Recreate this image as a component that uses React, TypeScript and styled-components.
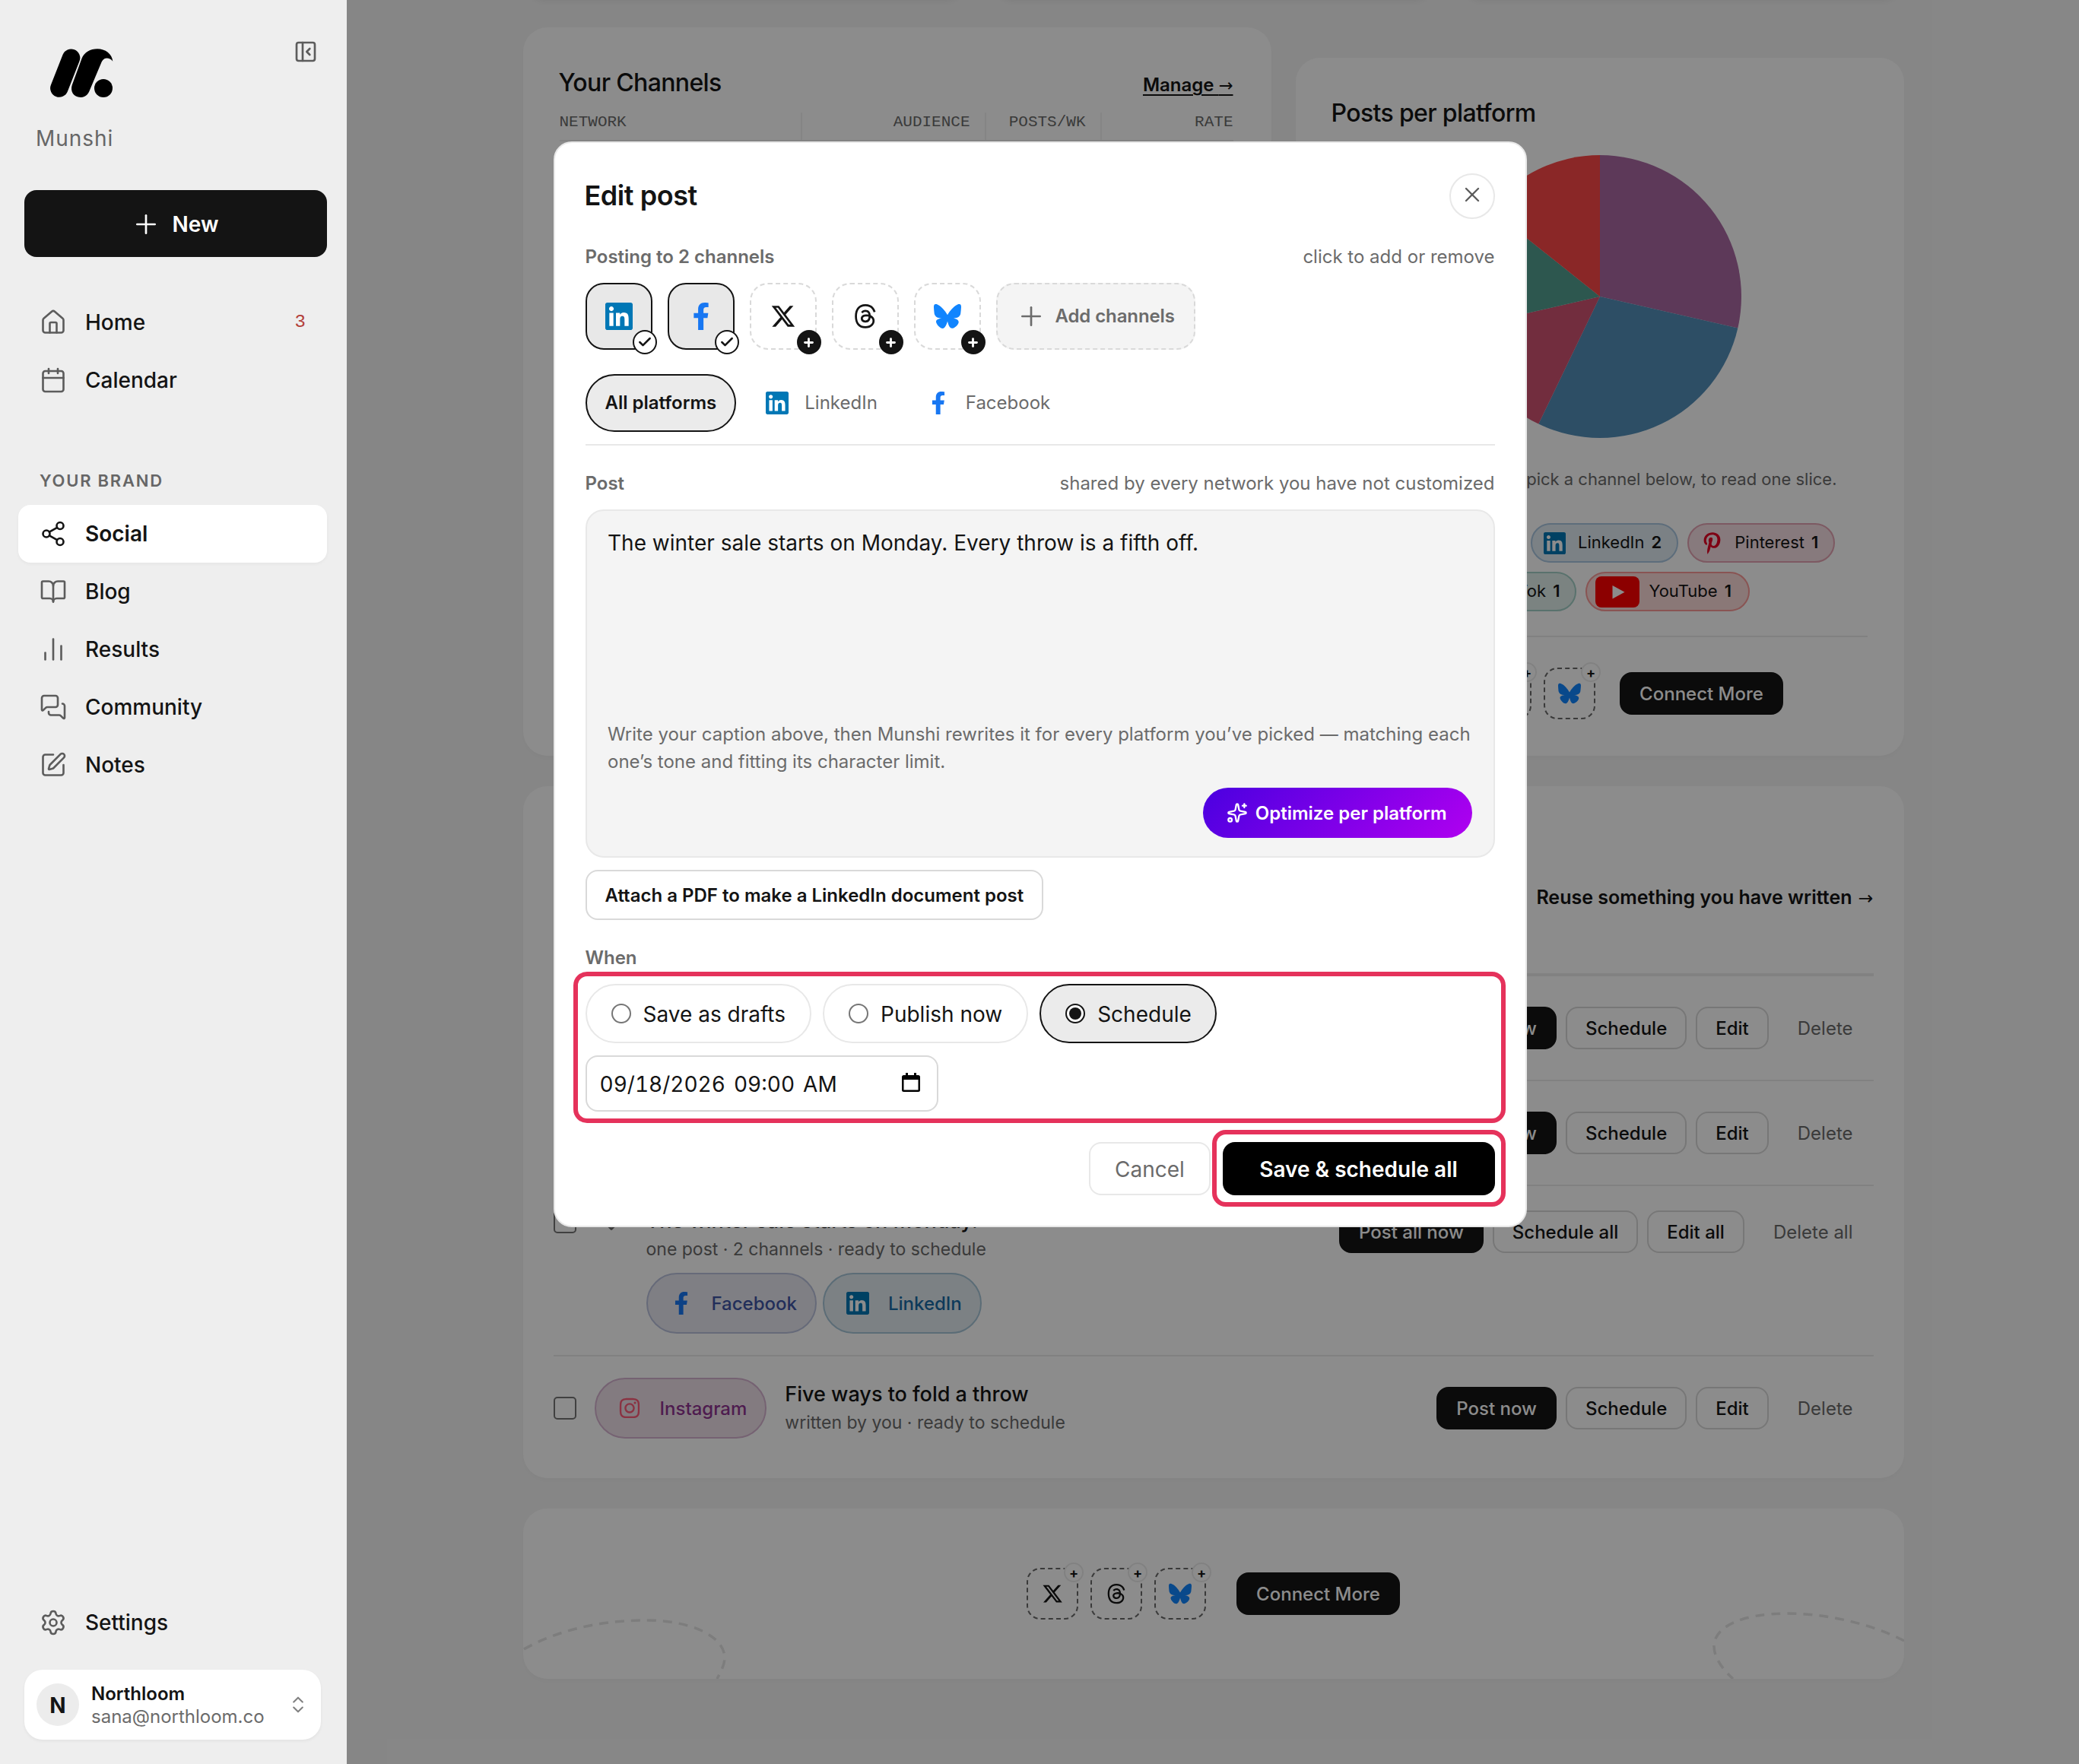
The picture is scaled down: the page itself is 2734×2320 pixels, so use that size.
import React, { useState } from 'react';
import styled, { createGlobalStyle, css } from 'styled-components';
import {
  BookOpen,
  Calendar,
  ChartNoAxesColumn,
  Check,
  ChevronDown,
  ChevronsUpDown,
  House,
  MessagesSquare,
  PanelLeftClose,
  Plus,
  Settings,
  Share2,
  Sparkles,
  SquarePen,
  X
} from 'lucide-react';
import { FaFacebookF, FaInstagram, FaPinterestP, FaTiktok } from 'react-icons/fa';
import { FaBluesky, FaThreads, FaXTwitter } from 'react-icons/fa6';

const GlobalStyle = createGlobalStyle`
  * {
    box-sizing: border-box;
  }

  body {
    margin: 0;
    background: #f5f5f5;
    color: #141414;
    font-family: Inter, 'Liberation Sans', sans-serif;
    font-size: 24px;
  }

  button,
  textarea {
    margin: 0;
    font: inherit;
    color: inherit;
  }
`;

type Network =
  | 'linkedin'
  | 'facebook'
  | 'x'
  | 'threads'
  | 'bluesky'
  | 'instagram'
  | 'pinterest'
  | 'tiktok'
  | 'youtube';

const Page = styled.div`
  display: flex;
  width: 2734px;
  height: 2320px;
  overflow: hidden;
  position: relative;
`;

/* ---------- sidebar ---------- */

const Sidebar = styled.aside`
  display: flex;
  flex-direction: column;
  width: 456px;
  height: 100%;
  padding: 52px 26px 32px 24px;
  background: #eeeeee;
  flex-shrink: 0;
`;

const BrandRow = styled.div`
  display: flex;
  justify-content: space-between;
  align-items: flex-start;
  height: 112px;
  padding: 0 12px 0 42px;
  color: #5c5c5c;

  .logo {
    margin-top: 12px;
  }
`;

const BrandName = styled.div`
  height: 36px;
  padding-left: 23px;
  font-size: 28px;
  line-height: 36px;
  letter-spacing: 0.95px;
  color: #666666;
`;

const NewButton = styled.button`
  display: flex;
  align-items: center;
  justify-content: center;
  gap: 15px;
  height: 88px;
  margin: 50px 0 48px 8px;
  padding: 2px 3px 0 0;
  border: none;
  border-radius: 16px;
  background: #141414;
  color: white;
  font-size: 28px;
  font-weight: 600;
`;

const NavItem = styled.a<{ active?: boolean }>`
  display: flex;
  align-items: center;
  gap: 24px;
  height: 76px;
  padding: 0 30px 0 28px;
  border-radius: 16px;
  font-size: 28px;
  font-weight: 500;
  flex-shrink: 0;

  svg {
    color: #5c5c5c;
  }

  ${({ active }) =>
    active &&
    css`
      background: white;
      font-weight: 600;
      box-shadow: 0 2px 4px rgba(0, 0, 0, 0.04);

      svg {
        color: #141414;
      }
    `}
`;

const NavCount = styled.span`
  margin-left: auto;
  margin-right: -2px;
  color: #b3403a;
  font-family: 'Liberation Mono', monospace;
  font-size: 24px;
  line-height: 28px;
`;

const NavHeading = styled.div`
  height: 28px;
  margin: 80px 0 18px;
  padding-left: 28px;
  color: #666666;
  font-size: 22px;
  font-weight: 600;
  line-height: 28px;
  letter-spacing: 1.76px;
`;

const NavSpacer = styled.div`
  flex: 1;
`;

const Account = styled.div`
  display: flex;
  align-items: center;
  gap: 16px;
  height: 92px;
  margin: 24px 8px 0;
  padding: 0 16px;
  border-radius: 24px;
  background: white;
  box-shadow: 0 2px 4px rgba(0, 0, 0, 0.05);

  svg {
    margin-left: auto;
    color: #808080;
  }
`;

const Avatar = styled.div`
  width: 56px;
  height: 56px;
  border-radius: 50%;
  background: #ececec;
  font-size: 28px;
  font-weight: 700;
  line-height: 58px;
  text-align: center;
`;

const AccountText = styled.div`
  padding-top: 2px;
  font-size: 24px;
  line-height: 30px;

  strong {
    display: block;
    font-weight: 600;
  }

  span {
    color: #6b6b6b;
  }
`;

/* ---------- page behind the dialog ---------- */

const Main = styled.main`
  position: relative;
  flex: 1;
  padding: 0 230.5px 0 231.5px;
  overflow: hidden;
`;

const Scrim = styled.div`
  position: absolute;
  inset: 0;
  background: rgba(0, 0, 0, 0.45);
`;

const Card = styled.section`
  border-radius: 32px;
  background: white;
  box-shadow: 0 4px 6px rgba(0, 0, 0, 0.025);
`;

const StatRow = styled.div`
  display: grid;
  grid-template-columns: repeat(3, 1fr);
  gap: 32px;
  height: 36px;

  ${Card} {
    height: 60px;
    margin-top: -60px;
    box-shadow: 0 4px 6px rgba(0, 0, 0, 0.045);
  }
`;

const TopGrid = styled.div`
  display: grid;
  grid-template-columns: 984px 800px;
  gap: 32px;
  height: 958px;
`;

const ChannelsCard = styled(Card)`
  padding: 50px 50px 0 48px;
`;

const ChannelsHead = styled.div`
  display: flex;
  justify-content: space-between;
  align-items: baseline;
  height: 62px;
`;

const CardTitle = styled.h2`
  margin: 0 0 0 -1px;
  font-size: 32px;
  font-weight: 500;
  line-height: 46px;
  letter-spacing: -0.64px;
`;

const Arrow = styled.span`
  font-family: 'DejaVu Sans', sans-serif;
  font-size: 0.94em;
  font-weight: 400;
  line-height: 1;
`;

const ManageLink = styled.a`
  font-weight: 600;
  text-decoration: underline;
  text-underline-offset: 4px;
  text-decoration-thickness: 2px;
`;

const ChannelsTable = styled.div`
  display: grid;
  grid-template-columns: 317px 242px 152px 1fr;
  height: 38px;
  border-bottom: 2px solid #eeeeee;
`;

const HeadCell = styled.div<{ first?: boolean }>`
  padding-top: 1px;
  padding-right: ${({ first }) => (first ? 0 : 19)}px;
  border-left: ${({ first }) => (first ? 'none' : '2px solid #f2f2f2')};
  color: #6b6b6b;
  font-family: 'Liberation Mono', monospace;
  font-size: 21px;
  line-height: 24px;
  text-align: ${({ first }) => (first ? 'left' : 'right')};

  &:last-child {
    padding-right: 0;
  }
`;

const PlatformCard = styled(Card)`
  display: flex;
  flex-direction: column;
  align-items: center;
  margin-top: 40px;
  padding: 50px 48px 0;

  ${CardTitle} {
    align-self: flex-start;
  }
`;

const PieHint = styled.p`
  width: 624px;
  margin: 39px 0 0;
  color: #6b6b6b;
  font-size: 22px;
  line-height: 30px;
  text-align: right;
  white-space: nowrap;
`;

const Legend = styled.div`
  display: flex;
  flex-wrap: wrap;
  justify-content: center;
  gap: 12px;
  width: 640px;
  margin-top: 43px;
  margin-left: -3px;
`;

interface Tint {
  bg: string;
  line: string;
}

const LegendPill = styled.span<{ tint: Tint; tight?: boolean }>`
  display: flex;
  align-items: center;
  gap: 12px;
  height: 52px;
  padding: ${({ tight }) => (tight ? '0 22px 0 11px' : '0 20px 0 12px')};
  border: 2px solid ${({ tint }) => tint.line};
  border-radius: 26px;
  background: ${({ tint }) => tint.bg};
  font-size: 22px;

  b {
    font-weight: 600;
    margin-left: -3px;
  }
`;

const LegendLabel = styled.span`
  margin-top: -2px;
`;

const LegendIcon = styled.span<{ wide?: boolean }>`
  display: flex;
  justify-content: center;
  width: ${({ wide }) => (wide ? 58 : 36)}px;
`;

const ConnectRow = styled.div<{ gap: number }>`
  display: flex;
  align-items: center;
  justify-content: center;

  button {
    margin-left: ${({ gap }) => gap - 16}px;
  }
`;

const GhostTile = styled.div`
  position: relative;
  display: flex;
  align-items: center;
  justify-content: center;
  width: 68px;
  height: 68px;
  margin-right: 16px;
  border: 2px dashed #6b6b6b;
  border-radius: 18px;
`;

const GhostPlus = styled.span`
  position: absolute;
  top: -9px;
  right: -9px;
  width: 26px;
  height: 26px;
  border: 2px solid #ececec;
  border-radius: 50%;
  background: white;
  font-size: 18px;
  font-weight: 700;
  line-height: 23px;
  text-align: center;
`;

const Rule = styled.div`
  width: 100%;
  height: 2px;
  margin: 32px 0 40px;
  background: #ebebeb;
`;

const SmallButton = styled.button<{ kind?: 'dark' | 'plain' }>`
  height: 56px;
  padding: 0 24px;
  border: 2px solid #d9d9d9;
  border-radius: 16px;
  background: white;
  font-size: 24px;
  font-weight: 500;
  white-space: nowrap;

  ${({ kind }) =>
    kind === 'dark' &&
    css`
      border-color: #141414;
      background: #141414;
      color: white;
    `}

  ${({ kind }) =>
    kind === 'plain' &&
    css`
      border-color: transparent;
      color: #6b6b6b;
      font-weight: 400;
    `}
`;

const QueueCard = styled(Card)`
  height: 910px;
  margin-top: 40px;
  padding: 0 40px;
`;

const QueueHead = styled.div`
  display: flex;
  justify-content: flex-end;
  height: 248px;
  padding-top: 130px;
  border-bottom: 2px solid #ebebeb;
  font-size: 25px;
  font-weight: 600;
  line-height: 32px;

  ${Arrow} {
    margin-left: 2px;
  }
`;

const QueueRow = styled.div<{ tall?: boolean }>`
  display: flex;
  align-items: ${({ tall }) => (tall ? 'flex-start' : 'center')};
  height: ${({ tall }) => (tall ? 224 : 138)}px;
  padding-top: ${({ tall }) => (tall ? 32 : 0)}px;
  border-top: 2px solid #ebebeb;
`;

const RowActions = styled.div`
  display: flex;
  gap: 12px;
  margin-left: auto;
  padding-right: 1px;
`;

const Checkbox = styled.span`
  width: 30px;
  height: 30px;
  border: 2px solid #767676;
  border-radius: 5px;
  flex-shrink: 0;
`;

const Chevron = styled.span`
  display: flex;
  width: 92px;
  padding-top: 7px;
  padding-left: 32px;
  color: #6b6b6b;
`;

const RowText = styled.div<{ raised?: boolean }>`
  margin-top: ${({ raised }) => (raised ? -5 : -1)}px;
  margin-left: ${({ raised }) => (raised ? 0 : 24)}px;
`;

const RowTitle = styled.div`
  font-size: 27px;
  font-weight: 500;
  line-height: 38px;
`;

const RowMeta = styled.div`
  color: #6b6b6b;
  font-size: 23px;
  line-height: 36px;
`;

const PillLine = styled.div`
  display: flex;
  gap: 8px;
  margin-top: 13px;
`;

const NetworkPill = styled.span<{ tint: Tint; ink: string; spaced?: boolean }>`
  display: flex;
  align-items: center;
  gap: 20px;
  height: 80px;
  margin-left: ${({ spaced }) => (spaced ? 24 : 0)}px;
  padding: 0 24px;
  border: 2px solid ${({ tint }) => tint.line};
  border-radius: 40px;
  background: ${({ tint }) => tint.bg};
  color: ${({ ink }) => ink};
  font-weight: 500;
`;

const IconSlot = styled.span`
  display: flex;
  justify-content: center;
  width: 40px;
`;

const FooterCard = styled(Card)`
  position: relative;
  height: 224px;
  margin-top: 40px;
  padding-top: 78px;
  overflow: hidden;
`;

const Swirls = styled.svg`
  position: absolute;
  inset: 0;
`;

/* ---------- dialog ---------- */

const Dialog = styled.div`
  position: absolute;
  top: 186px;
  left: 727.5px;
  display: flex;
  flex-direction: column;
  width: 1280px;
  height: 1428px;
  padding: 40px;
  border: 2px solid #e8e8e8;
  border-radius: 24px;
  background: white;
`;

const DialogHead = styled.div`
  display: flex;
  align-items: center;
  justify-content: space-between;
  height: 60px;
  margin-bottom: 34px;
`;

const DialogTitle = styled.h1`
  margin: -3px 0 0 -1px;
  font-size: 36px;
  font-weight: 600;
  letter-spacing: -0.45px;
`;

const CloseButton = styled.button`
  width: 60px;
  height: 60px;
  padding: 0 0 4px;
  border: 2px solid #e8e8e8;
  border-radius: 50%;
  background: white;
  color: #5c5c5c;

  svg {
    display: block;
    margin: 0 auto;
  }
`;

const FieldLabel = styled.div<{ nudge?: boolean }>`
  display: flex;
  justify-content: space-between;
  height: 32px;
  color: #6b6b6b;
  line-height: ${({ nudge }) => (nudge ? 34 : 32)}px;

  b {
    font-weight: 600;
  }
`;

const ChannelRow = styled.div`
  display: flex;
  gap: 20px;
  margin: 18px 0 32px;
`;

const ChannelTile = styled.button<{ selected?: boolean }>`
  position: relative;
  display: flex;
  align-items: center;
  justify-content: center;
  width: 88px;
  height: 88px;
  padding: 0;
  border: 2px dashed #d9d9d9;
  border-radius: 24px;
  background: white;

  ${({ selected }) =>
    selected &&
    css`
      border: 2px solid #141414;
      background: #e8e8e8;
    `}
`;

const TileBadge = styled.span<{ selected?: boolean }>`
  position: absolute;
  right: -8px;
  bottom: -8px;
  display: flex;
  align-items: center;
  justify-content: center;
  width: 32px;
  height: 32px;
  border: 2px solid #141414;
  border-radius: 50%;
  background: ${({ selected }) => (selected ? 'white' : '#141414')};
  color: ${({ selected }) => (selected ? '#141414' : 'white')};
`;

const AddChannels = styled.button`
  display: flex;
  align-items: center;
  gap: 12px;
  width: 262px;
  height: 88px;
  padding: 0 0 1px 24px;
  border: 2px dashed #d9d9d9;
  border-radius: 24px;
  background: #f4f4f4;
  color: #6b6b6b;
  font-weight: 600;
  letter-spacing: -0.1px;
  white-space: nowrap;
`;

const Tabs = styled.div`
  display: flex;
  gap: 8px;
  height: 94px;
  margin-bottom: 33px;
  border-bottom: 2px solid #e8e8e8;
`;

const Tab = styled.button<{ active?: boolean }>`
  display: flex;
  align-items: center;
  gap: 16px;
  height: 76px;
  padding: 0 24px 1px;
  border: 2px solid ${({ active }) => (active ? '#141414' : 'transparent')};
  border-radius: 38px;
  background: ${({ active }) => (active ? '#ebebeb' : 'transparent')};
  color: ${({ active }) => (active ? '#141414' : '#6b6b6b')};
  font-weight: ${({ active }) => (active ? 600 : 400)};
`;

const Composer = styled.div`
  display: flex;
  flex-direction: column;
  height: 458px;
  margin: 19px 0 16px;
  padding: 22px 28px 24px 27.5px;
  border: 2px solid #e8e8e8;
  border-radius: 24px;
  background: #f4f4f4;
`;

const ComposerText = styled.div`
  flex: 1;
  font-size: 28px;
  line-height: 40px;
`;

const ComposerHint = styled.div`
  margin-bottom: 16px;
  color: #6b6b6b;
  line-height: 36px;
`;

const OptimizeButton = styled.button`
  display: flex;
  align-items: center;
  align-self: flex-end;
  gap: 10px;
  height: 66px;
  padding: 0 33px 0 31px;
  border: none;
  border-radius: 33px;
  background: linear-gradient(135deg, #4a00e0, #b000f0);
  color: white;
  font-weight: 600;
`;

const AttachButton = styled.button`
  align-self: flex-start;
  height: 66px;
  margin-bottom: 33px;
  padding: 0 24px;
  border: 2px solid #d9d9d9;
  border-radius: 16px;
  background: white;
  font-weight: 600;
`;

const WhenArea = styled.div`
  position: relative;
  margin-top: 19px;
`;

const Highlight = styled.div`
  position: absolute;
  inset: -16px -14px -15px -16px;
  border: 6px solid #e5325b;
  border-radius: 18px;
  pointer-events: none;
`;

const OptionRow = styled.div`
  display: flex;
  gap: 15.5px;
  margin-bottom: 16px;
`;

const Option = styled.label<{ checked: boolean }>`
  display: flex;
  align-items: center;
  gap: 16px;
  height: 78px;
  padding: 0 31.5px 0 32px;
  border: 2px solid ${({ checked }) => (checked ? '#141414' : '#e8e8e8')};
  border-radius: 39px;
  background: ${({ checked }) => (checked ? '#ebebeb' : 'white')};
  font-size: 28px;
  line-height: 36px;
`;

const OptionLabel = styled.span`
  padding-top: 2px;
`;

const Radio = styled.span<{ checked: boolean }>`
  display: flex;
  align-items: center;
  justify-content: center;
  width: 26px;
  height: 26px;
  border: 2px solid ${({ checked }) => (checked ? '#141414' : '#767676')};
  border-radius: 50%;
  background: white;

  &::after {
    content: '';
    width: 16px;
    height: 16px;
    border-radius: 50%;
    background: ${({ checked }) => (checked ? '#141414' : 'transparent')};
  }
`;

const DateInput = styled.div`
  display: flex;
  align-items: center;
  justify-content: space-between;
  width: 464px;
  height: 74px;
  padding: 1px 22px 0 17px;
  border: 2px solid #d9d9d9;
  border-radius: 16px;
  font-size: 28px;
  font-variant-numeric: tabular-nums;
  word-spacing: 3.5px;

  svg {
    margin-top: -3px;
  }
`;

const DialogActions = styled.div`
  display: flex;
  justify-content: flex-end;
  gap: 16px;
  margin-top: 40px;
`;

const CancelButton = styled.button`
  width: 160px;
  height: 70px;
  padding: 2px 0 0 1px;
  border: 2px solid #e8e8e8;
  border-radius: 16px;
  background: white;
  color: #6b6b6b;
  font-size: 28px;
`;

const SaveWrap = styled.div`
  position: relative;

  ${Highlight} {
    inset: -16px -14px -15px -14px;
  }
`;

const SaveButton = styled.button`
  width: 358px;
  height: 70px;
  padding: 2px 0 0;
  border: none;
  border-radius: 16px;
  background: black;
  color: white;
  font-size: 28px;
  font-weight: 600;
`;

function Logo() {
  return (
    <svg className="logo" width="84" height="66" viewBox="0 0 84 66">
      <path d="M27.5 12.3 11.9 52" stroke="#000" strokeWidth="23.6" strokeLinecap="round" />
      <path d="M28.8 47.8 41.5 13C44.8 4.5 53 .3 62 .3c10.500 0 19.500 6.500 20.300 16.500-2-3-5-4.300-8-4.300-3.800 0-5.800 3-7.300 6.500L51.200 56.500C48.500 62.500 43.500 64 39.800 64c-9 0-13.800-8-11-16.200Z" />
      <circle cx="70" cy="52" r="12" />
    </svg>
  );
}

function LinkedInMark({ size }: { size: number }) {
  return (
    <svg width={size} height={size} viewBox="0 0 24 24">
      <rect x="1" y="1" width="22" height="22" fill="#fff" />
      <path
        fill="#0077b5"
        d="M20.447 20.452h-3.554v-5.569c0-1.328-.027-3.037-1.852-3.037-1.853 0-2.136 1.445-2.136 2.939v5.667H9.351V9h3.414v1.561h.046c.477-.9 1.637-1.85 3.37-1.85 3.601 0 4.267 2.37 4.267 5.455v6.286zM5.337 7.433c-1.144 0-2.063-.926-2.063-2.065 0-1.138.92-2.063 2.063-2.063 1.14 0 2.064.925 2.064 2.063 0 1.139-.925 2.065-2.064 2.065zm1.782 13.019H3.555V9h3.564v11.452zM22.225 0H1.771C.792 0 0 .774 0 1.729v20.542C0 23.227.792 24 1.771 24h20.451C23.2 24 24 23.227 24 22.271V1.729C24 .774 23.2 0 22.222 0h.003z"
      />
    </svg>
  );
}

function YouTubeMark() {
  return (
    <svg width="58" height="41" viewBox="0 0 58 41">
      <rect width="58" height="41" rx="8" fill="#f00" />
      <path d="M22.500 12v17.500L38.500 20.700Z" fill="#fff" />
    </svg>
  );
}

function NetworkIcon({ name, size }: { name: Network; size: number }) {
  switch (name) {
    case 'linkedin':
      return <LinkedInMark size={size} />;
    case 'facebook':
      return <FaFacebookF size={size} color="#1877f2" />;
    case 'x':
      return <FaXTwitter size={size * 0.94} color="#141414" />;
    case 'threads':
      return <FaThreads size={size * 0.94} color="#141414" />;
    case 'bluesky':
      return <FaBluesky size={size} color="#1185fe" />;
    case 'instagram':
      return <FaInstagram size={size} color="#fb5b78" />;
    case 'pinterest':
      return <FaPinterestP size={size} color="#e60023" />;
    case 'tiktok':
      return <FaTiktok size={size} color="#141414" />;
    default:
      return <YouTubeMark />;
  }
}

const platforms: { id: Network; label: string; posts: number; slice: string; tint: Tint }[] = [
  {
    id: 'instagram',
    label: 'Instagram',
    posts: 2,
    slice: '#a969a2',
    tint: { bg: '#efe0ea', line: '#dcb4d2' }
  },
  {
    id: 'linkedin',
    label: 'LinkedIn',
    posts: 2,
    slice: '#528eb9',
    tint: { bg: '#e0ecf3', line: '#a9c6e0' }
  },
  {
    id: 'pinterest',
    label: 'Pinterest',
    posts: 1,
    slice: '#cf5271',
    tint: { bg: '#f6dfe4', line: '#e3a3b2' }
  },
  {
    id: 'tiktok',
    label: 'TikTok',
    posts: 1,
    slice: '#529e91',
    tint: { bg: '#e0eeec', line: '#a3cfc6' }
  },
  {
    id: 'youtube',
    label: 'YouTube',
    posts: 1,
    slice: '#fb4747',
    tint: { bg: '#fbdad9', line: '#fa9a98' }
  }
];

function PlatformPie() {
  const total = platforms.reduce((sum, p) => sum + p.posts, 0);
  const r = 186;
  const point = (n: number) => {
    const a = (n / total) * Math.PI * 2;
    return `${r + r * Math.sin(a)} ${r - r * Math.cos(a)}`;
  };

  let seen = 0;
  return (
    <svg width={r * 2} height={r * 2} style={{ marginTop: 32 }}>
      {platforms.map((p) => {
        const from = point(seen);
        seen += p.posts;
        return (
          <path key={p.id} d={`M${r} ${r}L${from}A${r} ${r} 0 0 1 ${point(seen)}Z`} fill={p.slice} />
        );
      })}
    </svg>
  );
}

function ConnectMore({ gap }: { gap: number }) {
  const missing: Network[] = ['x', 'threads', 'bluesky'];
  return (
    <ConnectRow gap={gap}>
      {missing.map((name) => (
        <GhostTile key={name}>
          <NetworkIcon name={name} size={30} />
          <GhostPlus>+</GhostPlus>
        </GhostTile>
      ))}
      <SmallButton kind="dark">Connect More</SmallButton>
    </ConnectRow>
  );
}

function Actions({ all }: { all?: boolean }) {
  const suffix = all ? ' all' : '';
  return (
    <RowActions>
      <SmallButton kind="dark">{all ? 'Post all now' : 'Post now'}</SmallButton>
      <SmallButton>Schedule{suffix}</SmallButton>
      <SmallButton>Edit{suffix}</SmallButton>
      <SmallButton kind="plain">Delete{suffix}</SmallButton>
    </RowActions>
  );
}

const brandNav = [
  { label: 'Social', icon: Share2 },
  { label: 'Blog', icon: BookOpen },
  { label: 'Results', icon: ChartNoAxesColumn },
  { label: 'Community', icon: MessagesSquare },
  { label: 'Notes', icon: SquarePen }
];

function AppSidebar() {
  return (
    <Sidebar>
      <BrandRow>
        <Logo />
        <PanelLeftClose size={32} strokeWidth={2} />
      </BrandRow>
      <BrandName>Munshi</BrandName>
      <NewButton>
        <Plus size={40} strokeWidth={1.6} />
        New
      </NewButton>
      <NavItem>
        <House size={36} strokeWidth={1.75} />
        Home
        <NavCount>3</NavCount>
      </NavItem>
      <NavItem>
        <Calendar size={36} strokeWidth={1.75} />
        Calendar
      </NavItem>
      <NavHeading>YOUR BRAND</NavHeading>
      {brandNav.map(({ label, icon: Icon }) => (
        <NavItem key={label} active={label === 'Social'}>
          <Icon size={36} strokeWidth={1.75} />
          {label}
        </NavItem>
      ))}
      <NavSpacer />
      <NavItem>
        <Settings size={36} strokeWidth={1.75} />
        Settings
      </NavItem>
      <Account>
        <Avatar>N</Avatar>
        <AccountText>
          <strong>Northloom</strong>
          <span>sana@northloom.co</span>
        </AccountText>
        <ChevronsUpDown size={28} strokeWidth={1.75} />
      </Account>
    </Sidebar>
  );
}

const channels: { id: Network; selected?: boolean }[] = [
  { id: 'linkedin', selected: true },
  { id: 'facebook', selected: true },
  { id: 'x' },
  { id: 'threads' },
  { id: 'bluesky' }
];

const whenOptions = ['Save as drafts', 'Publish now', 'Schedule'];

function EditPostDialog() {
  const [when, setWhen] = useState('Schedule');

  return (
    <Dialog>
      <DialogHead>
        <DialogTitle>Edit post</DialogTitle>
        <CloseButton aria-label="Close">
          <X size={32} strokeWidth={1.75} />
        </CloseButton>
      </DialogHead>

      <FieldLabel>
        <b>Posting to 2 channels</b>
        <span>click to add or remove</span>
      </FieldLabel>
      <ChannelRow>
        {channels.map(({ id, selected }) => (
          <ChannelTile key={id} selected={selected}>
            <NetworkIcon name={id} size={36} />
            <TileBadge selected={selected}>
              {selected ? <Check size={20} strokeWidth={3} /> : <Plus size={17} strokeWidth={4} />}
            </TileBadge>
          </ChannelTile>
        ))}
        <AddChannels>
          <Plus size={40} strokeWidth={1.6} />
          Add channels
        </AddChannels>
      </ChannelRow>

      <Tabs>
        <Tab active>All platforms</Tab>
        <Tab>
          <IconSlot>
            <NetworkIcon name="linkedin" size={30} />
          </IconSlot>
          LinkedIn
        </Tab>
        <Tab>
          <IconSlot>
            <NetworkIcon name="facebook" size={30} />
          </IconSlot>
          Facebook
        </Tab>
      </Tabs>

      <FieldLabel nudge>
        <b>Post</b>
        <span>shared by every network you have not customized</span>
      </FieldLabel>
      <Composer>
        <ComposerText>The winter sale starts on Monday. Every throw is a fifth off.</ComposerText>
        <ComposerHint>
          Write your caption above, then Munshi rewrites it for every platform you’ve picked —
          matching each one’s tone and fitting its character limit.
        </ComposerHint>
        <OptimizeButton>
          <Sparkles size={28} strokeWidth={2} />
          Optimize per platform
        </OptimizeButton>
      </Composer>
      <AttachButton>Attach a PDF to make a LinkedIn document post</AttachButton>

      <FieldLabel nudge>
        <b>When</b>
      </FieldLabel>
      <WhenArea>
        <OptionRow>
          {whenOptions.map((label) => (
            <Option key={label} checked={when === label} onClick={() => setWhen(label)}>
              <Radio checked={when === label} />
              <OptionLabel>{label}</OptionLabel>
            </Option>
          ))}
        </OptionRow>
        <DateInput>
          09/18/2026 09:00 AM
          <svg width="24" height="26" viewBox="0 0 24 26">
            <path d="M5 0h3v3h8V0h3v3h2.500A2.500 2.500 0 0 1 24 5.500v17a2.500 2.500 0 0 1-2.500 2.500h-19A2.500 2.500 0 0 1 0 22.500v-17A2.500 2.500 0 0 1 2.500 3H5Zm-2.500 9v13.500h19V9Z" />
          </svg>
        </DateInput>
        <Highlight />
      </WhenArea>

      <DialogActions>
        <CancelButton>Cancel</CancelButton>
        <SaveWrap>
          <SaveButton>Save &amp; schedule all</SaveButton>
          <Highlight />
        </SaveWrap>
      </DialogActions>
    </Dialog>
  );
}

export default function App() {
  return (
    <Page>
      <GlobalStyle />
      <AppSidebar />
      <Main>
        <StatRow>
          <Card />
          <Card />
          <Card />
        </StatRow>
        <TopGrid>
          <ChannelsCard>
            <ChannelsHead>
              <CardTitle>Your Channels</CardTitle>
              <ManageLink>
                Manage <Arrow>→</Arrow>
              </ManageLink>
            </ChannelsHead>
            <ChannelsTable>
              <HeadCell first>NETWORK</HeadCell>
              <HeadCell>AUDIENCE</HeadCell>
              <HeadCell>POSTS/WK</HeadCell>
              <HeadCell>RATE</HeadCell>
            </ChannelsTable>
          </ChannelsCard>
          <PlatformCard>
            <CardTitle>Posts per platform</CardTitle>
            <PlatformPie />
            <PieHint>pick a channel below, to read one slice.</PieHint>
            <Legend>
              {platforms.map((p) => (
                <LegendPill key={p.id} tint={p.tint} tight={p.id === 'youtube'}>
                  <LegendIcon wide={p.id === 'youtube'}>
                    <NetworkIcon name={p.id} size={29} />
                  </LegendIcon>
                  <LegendLabel>{p.label}</LegendLabel>
                  <LegendLabel as="b">{p.posts}</LegendLabel>
                </LegendPill>
              ))}
            </Legend>
            <Rule />
            <ConnectMore gap={32} />
          </PlatformCard>
        </TopGrid>

        <QueueCard>
          <QueueHead>
            <span>
              Reuse something you have written <Arrow>→</Arrow>
            </span>
          </QueueHead>
          <QueueRow>
            <Actions />
          </QueueRow>
          <QueueRow>
            <Actions />
          </QueueRow>
          <QueueRow tall>
            <Checkbox />
            <Chevron>
              <ChevronDown size={28} strokeWidth={2.4} />
            </Chevron>
            <RowText raised>
              <RowTitle>The winter sale starts on Monday.</RowTitle>
              <RowMeta>one post · 2 channels · ready to schedule</RowMeta>
              <PillLine>
                <NetworkPill tint={{ bg: '#e7e8f0', line: '#bac1dc' }} ink="#3e55a4">
                  <IconSlot>
                    <NetworkIcon name="facebook" size={30} />
                  </IconSlot>
                  Facebook
                </NetworkPill>
                <NetworkPill tint={{ bg: '#e2ecf0', line: '#a6c5d8' }} ink="#196aa5">
                  <IconSlot>
                    <NetworkIcon name="linkedin" size={30} />
                  </IconSlot>
                  LinkedIn
                </NetworkPill>
              </PillLine>
            </RowText>
            <Actions all />
          </QueueRow>
          <QueueRow>
            <Checkbox />
            <NetworkPill tint={{ bg: '#efe1ea', line: '#d6b2d0' }} ink="#8f3490" spaced>
              <IconSlot>
                <NetworkIcon name="instagram" size={30} />
              </IconSlot>
              Instagram
            </NetworkPill>
            <RowText>
              <RowTitle>Five ways to fold a throw</RowTitle>
              <RowMeta>written by you · ready to schedule</RowMeta>
            </RowText>
            <Actions />
          </QueueRow>
        </QueueCard>

        <FooterCard>
          <Swirls width="1816" height="224" fill="none" stroke="#e4e4e4" strokeWidth="3.5">
            <path
              strokeDasharray="12 9"
              d="M1 185C52 156 112 147 162 147C217 147 264 166 265 196C265 206 260 214 255 224"
            />
            <path
              strokeDasharray="12 9"
              d="M1816 174C1772 151 1712 138 1662 138C1602 138 1566 156 1566 181C1566 196 1577 211 1591 224"
            />
          </Swirls>
          <ConnectMore gap={40} />
        </FooterCard>
        <Scrim />
      </Main>
      <EditPostDialog />
    </Page>
  );
}
